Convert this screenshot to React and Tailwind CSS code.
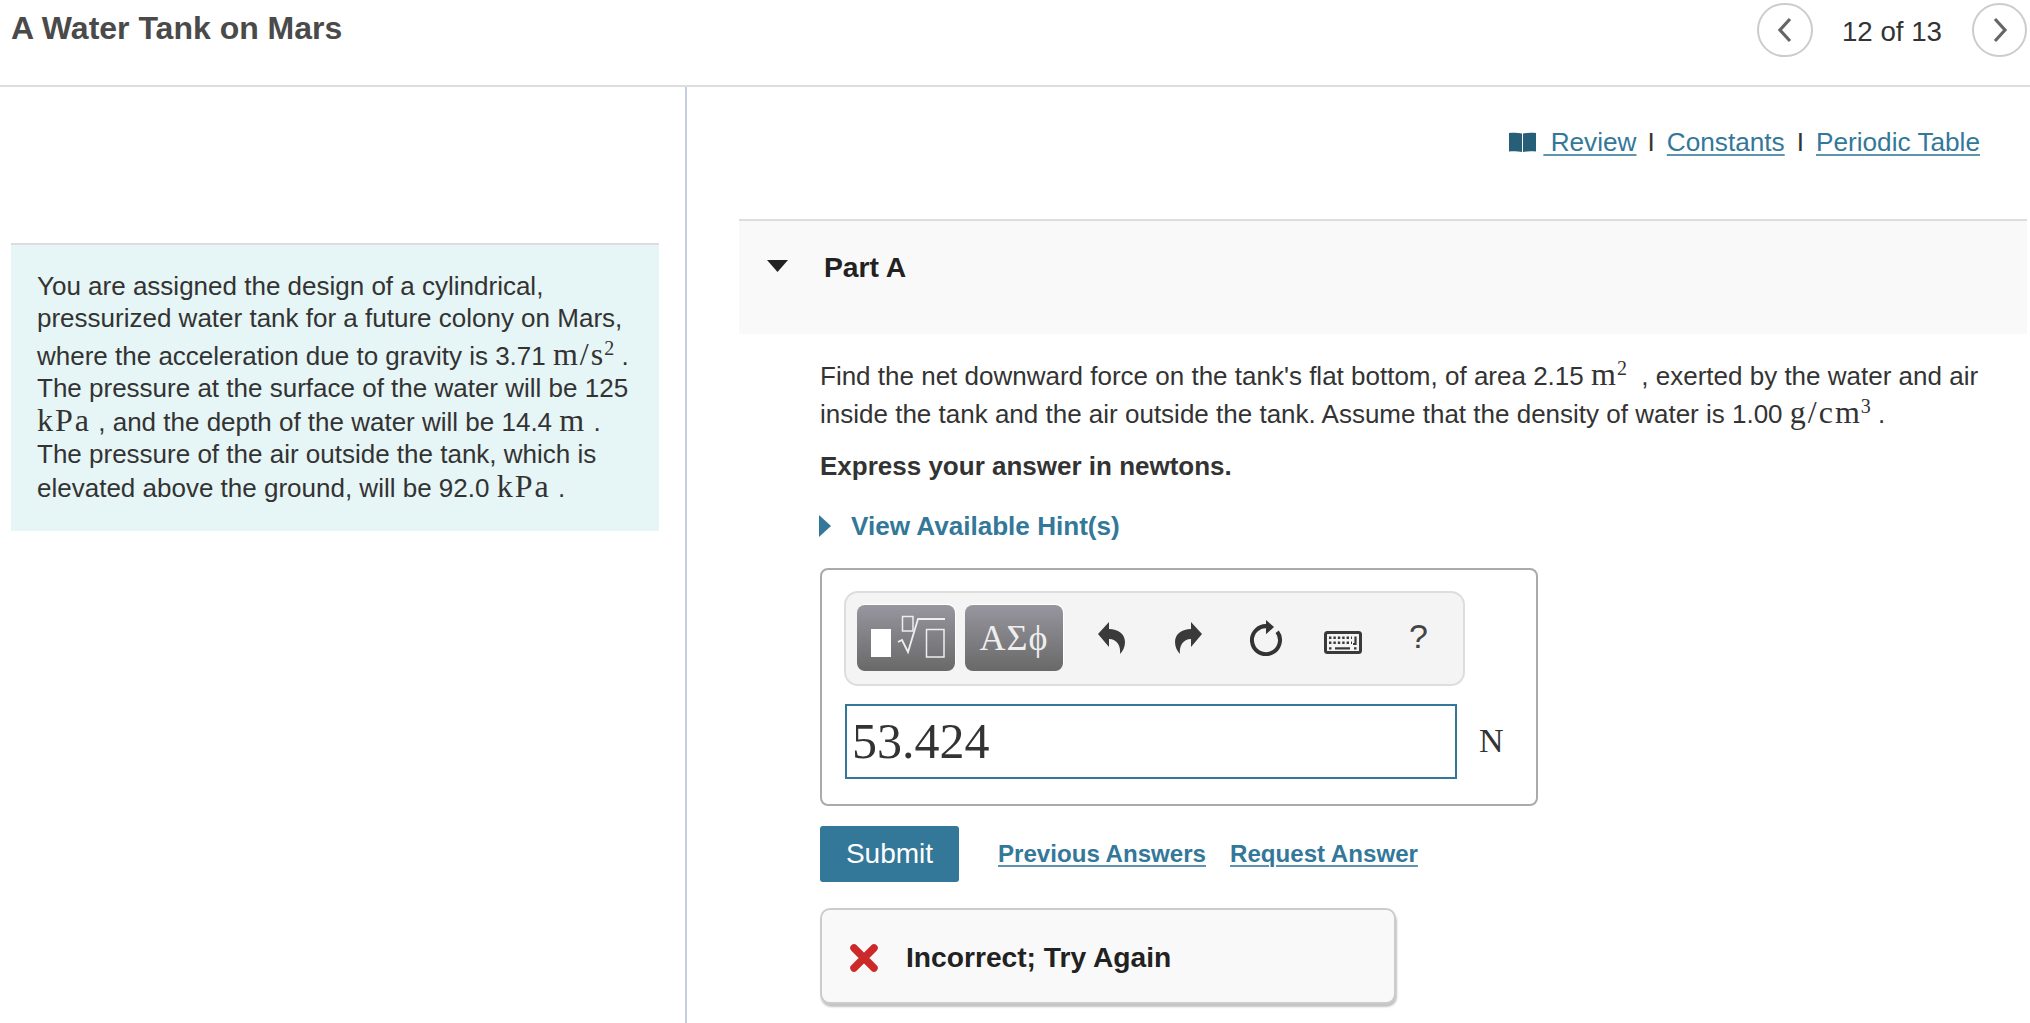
const M = ({ children }) => (
  <span className="font-['Liberation_Serif',serif] text-[32px] tracking-[2px] leading-[0]">{children}</span>
);

const S = ({ children }) => (
  <sup className="text-[20px] tracking-normal -ml-[1px]">{children}</sup>
);

const Chevron = ({ right }) => (
  <svg width="20" height="26" viewBox="0 0 20 26" fill="none" stroke="#666" strokeWidth="3.2">
    <path d={right ? "M5 2 L15 13 L5 24" : "M15 2 L5 13 L15 24"} />
  </svg>
);

const Arrow = ({ flip }) => (
  <svg width="27" height="32" viewBox="0 0 27 32" fill="#3a3a3a" className={flip ? "-scale-x-100 -mt-[2px]" : "-mt-[2px]"}>
    <path d="M0 12 L11 0 V7 C20 7 27 12 27 20 C27 25 25 29 22 32 C23 24 19 17 11 17 V25 Z" />
  </svg>
);

const Keyboard = () => (
  <svg width="38" height="23" viewBox="0 0 38 23" className="mt-[7px]">
    <rect x="1.5" y="1.5" width="35" height="20" rx="2" fill="#f4f4f4" stroke="#3a3a3a" strokeWidth="3" />
    <path d="M5 6.7 H28 M5 11.7 H28" stroke="#3a3a3a" strokeWidth="2.4" strokeDasharray="2.4 2" />
    <path d="M31.5 5.5 V13 H29 M5 17.3 H7.5 M11 17.3 H26 M30 17.3 H32.5" fill="none" stroke="#3a3a3a" strokeWidth="2.2" />
  </svg>
);

const Reset = () => (
  <svg width="32" height="36" viewBox="0 0 32 36" fill="none" className="-mt-[2px]">
    <path d="M18 6.3 A14 14 0 1 0 27.2 11.8" stroke="#333" strokeWidth="4" />
    <path d="M16 0 L24 7 L16 14.3 Z" fill="#333" />
  </svg>
);

const Link = ({ children, className = "" }) => (
  <a className={"text-[#337899] underline decoration-[#5d95b0] decoration-2 underline-offset-[3px] " + className}>{children}</a>
);

const Slot = ({ children }) => (
  <div className="w-[77px] flex justify-center items-center">{children}</div>
);

export default function App() {
  return (
    <div className="h-[1023px] overflow-hidden bg-white font-['Liberation_Sans',sans-serif] text-[26px] text-[#333]">
      <header className="h-[87px] border-b-2 border-[#dddddd] flex justify-between">
        <h1 className="pl-[11px] pt-[9px] text-[32px] leading-[38px] font-bold text-[#4a4a4a]">A Water Tank on Mars</h1>
        <div className="flex items-start pt-[3px] pr-[3px]">
          <button className="w-[56px] h-[54px] rounded-full border-2 border-[#cccccc] flex items-center justify-center"><Chevron /></button>
          <span className="ml-[29px] mr-[30px] mt-[13px] text-[27.7px] leading-[32px]">12 of 13</span>
          <button className="w-[55px] h-[54px] rounded-full border-2 border-[#cccccc] flex items-center justify-center"><Chevron right /></button>
        </div>
      </header>

      <div className="flex h-[936px]">
        <aside className="w-[687px] shrink-0 border-r-2 border-[#c3cfe0] pl-[11px] pr-[26px] pt-[156px]">
          <div className="h-[288px] border-t-2 border-[#dddddd] bg-[#e6f5f5] pl-[26px] pt-[25px] leading-[32px] whitespace-nowrap">
            <div className="h-[32px]">You are assigned the design of a cylindrical,</div>
            <div className="h-[32px]">pressurized water tank for a future colony on Mars,</div>
            <div className="h-[32px] mt-[6px]">where the acceleration due to gravity is 3.71 <M>m/s<S>2</S></M> .</div>
            <div className="h-[32px]">The pressure at the surface of the water will be 125</div>
            <div className="h-[32px] mt-[2px]"><M>kPa</M> , and the depth of the water will be 14.4 <M>m</M> .</div>
            <div className="h-[32px]">The pressure of the air outside the tank, which is</div>
            <div className="h-[32px] mt-[2px]">elevated above the ground, will be 92.0 <M>kPa</M> .</div>
          </div>
        </aside>

        <main className="flex-1 min-w-0">
          <div className="flex justify-end items-center pt-[39px] pr-[50px] h-[71px] leading-[32px] text-[26.2px]">
            <svg width="27" height="20" viewBox="0 0 27 20" fill="#285f78" className="mr-[7px]">
              <path d="M0 1 C4 0.5 9 0.5 13 1.5 V20 C9 19 4 19 0 19.5 Z" />
              <path d="M27 1 C23 0.5 18 0.5 14 1.5 V20 C18 19 23 19 27 19.5 Z" />
            </svg>
            <Link>&nbsp;Review</Link>
            <span className="ml-[11px] mr-[12px] text-[#333]">I</span>
            <Link>Constants</Link>
            <span className="mx-[12px] text-[#333]">I</span>
            <Link>Periodic Table</Link>
          </div>

          <section className="mt-[61px] ml-[52px] mr-[3px] h-[115px] border-t-2 border-[#dddddd] bg-[#f9f9f9] flex items-start pl-[28px] pt-[30px]">
            <svg width="21" height="12" viewBox="0 0 21 12" fill="#222" className="mt-[9px] mr-[36px]">
              <path d="M0 0 H21 L10.5 12 Z" />
            </svg>
            <h2 className="font-bold text-[#222] text-[28.3px] leading-[32px]">Part A</h2>
          </section>

          <div className="ml-[133px]">
            <p className="mt-[23px] h-[38px] leading-[38px] whitespace-nowrap">Find the net downward force on the tank's flat bottom, of area 2.15 <M>m<S>2</S></M> &nbsp;, exerted by the water and air</p>
            <p className="h-[38px] leading-[38px] whitespace-nowrap">inside the tank and the air outside the tank. Assume that the density of water is 1.00 <M>g/cm<S>3</S></M> .</p>
            <p className="mt-[17px] h-[32px] leading-[32px] font-bold">Express your answer in newtons.</p>
            <div className="mt-[28px] h-[32px] flex items-center">
              <svg width="12" height="22" viewBox="0 0 12 22" fill="#337899" className="-ml-[1px] mr-[20px]">
                <path d="M0 0 L12 11 L0 22 Z" />
              </svg>
              <span className="font-bold text-[#337899] text-[26.1px] leading-[32px]">View Available Hint(s)</span>
            </div>

            <div className="mt-[26px] w-[718px] h-[238px] border-2 border-[#aaaaaa] rounded-[8px] pl-[22px] pt-[21px]">
              <div className="w-[621px] h-[95px] border-2 border-[#dddddd] bg-[#f4f4f4] rounded-[14px] flex items-center pl-[11px]">
                <div className="-mt-[2px] w-[98px] h-[66px] rounded-[8px] bg-gradient-to-b from-[#98969f] to-[#696969] shadow-[1px_-1px_0_#ffffff]">
                  <svg width="98" height="66" viewBox="0 0 98 66" fill="none">
                    <rect x="14" y="24" width="20" height="28" fill="#fff" />
                    <rect x="45.5" y="11.5" width="10.5" height="14.5" stroke="#eee" strokeWidth="1.5" />
                    <path d="M41 37 L45 35 L51 47 L61 14 L88 14" stroke="#eee" strokeWidth="1.8" />
                    <rect x="69.5" y="24.5" width="17.5" height="27.5" stroke="#eee" strokeWidth="1.5" />
                  </svg>
                </div>
                <div className="-mt-[2px] ml-[10px] w-[98px] h-[66px] rounded-[8px] bg-gradient-to-b from-[#98969f] to-[#696969] shadow-[1px_-1px_0_#ffffff] flex items-center justify-center font-['Liberation_Serif',serif] text-[36px] tracking-[1px] text-[#eeeeee] leading-none">ΑΣϕ</div>
                <div className="ml-[10px] flex items-center">
                  <Slot><Arrow /></Slot>
                  <Slot><Arrow flip /></Slot>
                  <Slot><Reset /></Slot>
                  <Slot><Keyboard /></Slot>
                  <Slot><span className="text-[34px] leading-none text-[#444] -mt-[6px] -ml-[2px]">?</span></Slot>
                </div>
              </div>
              <div className="mt-[18px] flex items-center">
                <div className="ml-[1px] w-[612px] h-[75px] border-2 border-[#337899] flex items-center pl-[5px] font-['Liberation_Serif',serif] text-[50px]">53.424</div>
                <span className="ml-[22px] -mt-[3px] font-['Liberation_Serif',serif] text-[34px]">N</span>
              </div>
            </div>

            <div className="mt-[20px] flex items-center">
              <button className="w-[139px] h-[56px] bg-[#337899] rounded-[3px] text-white text-[28px]">Submit</button>
              <Link className="ml-[39px] font-bold text-[24.1px]">Previous Answers</Link>
              <Link className="ml-[24px] font-bold text-[24.1px]">Request Answer</Link>
            </div>

            <div className="mt-[26px] w-[576px] h-[96px] border-2 border-[#cccccc] rounded-[10px] bg-[#f9f9f9] shadow-[1px_3px_2px_#c4c4c4] flex items-center pl-[28px] pt-[3px]">
              <svg width="28" height="28" viewBox="0 0 28 28" className="mr-[28px]">
                <path d="M4 4 L24 24 M24 4 L4 24" stroke="#cc2a2a" strokeWidth="7.5" strokeLinecap="round" />
              </svg>
              <span className="font-bold text-[#222] text-[28.2px]">Incorrect; Try Again</span>
            </div>
          </div>
        </main>
      </div>
    </div>
  );
}
